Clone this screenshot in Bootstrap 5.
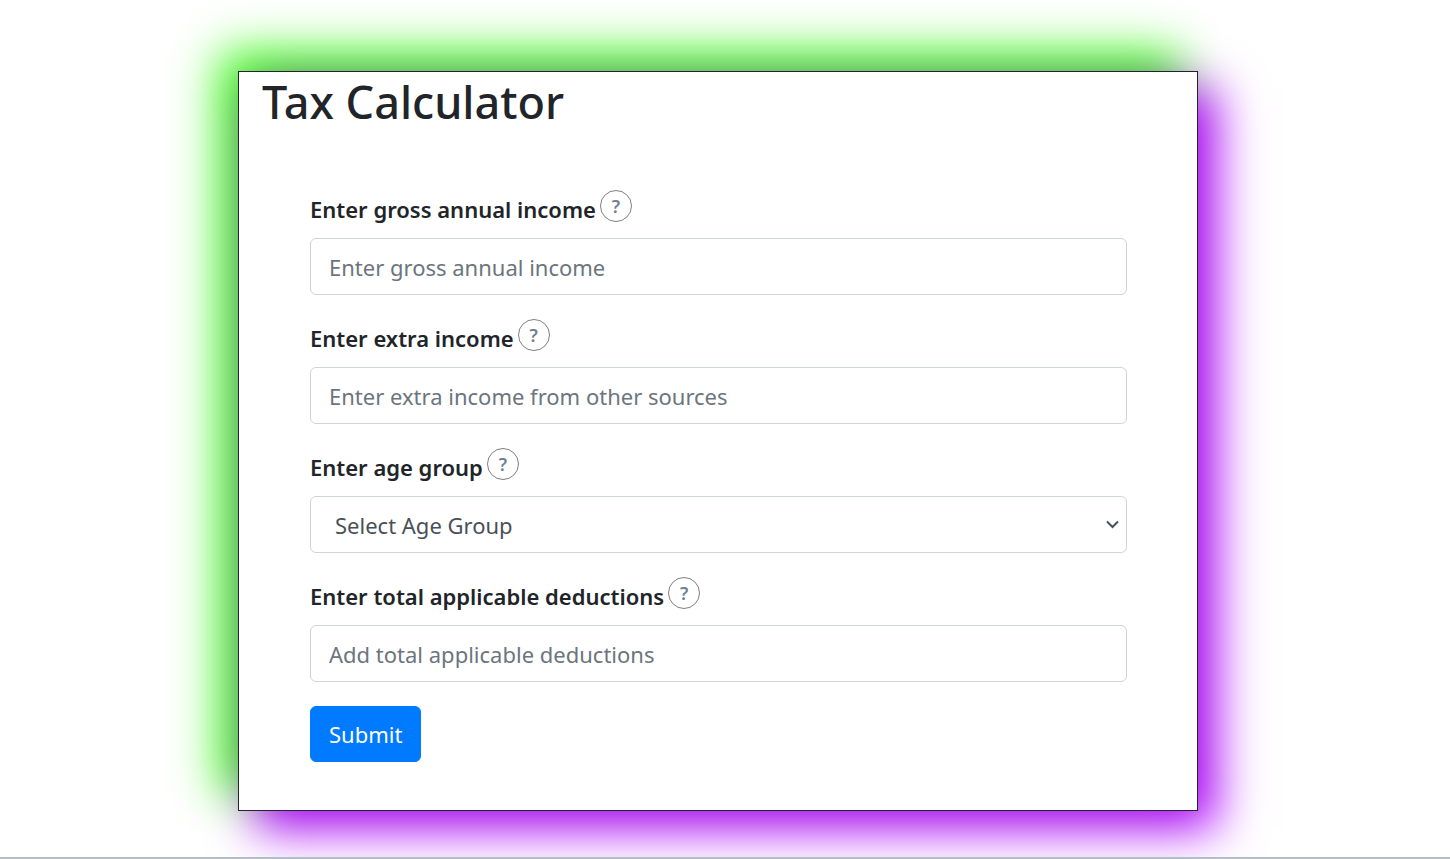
<!DOCTYPE html>
<html lang="en">
<head>
<meta charset="utf-8">
<meta name="viewport" content="width=device-width, initial-scale=1">
<title>Tax Calculator</title>
<link href="https://cdn.jsdelivr.net/npm/bootstrap@5.3.0/dist/css/bootstrap.min.css" rel="stylesheet">
<style>
  body { font-family: "Noto Sans", "Open Sans", sans-serif; font-size: 22px; line-height: 36px; color: #212529; }
  .page-main { padding: 71px 14px 46px 0; }
  .calc-panel { max-width: 960px; border: 1px solid #212529; background: #fff;
    box-shadow: 18px 18px 45px #b000fe, -18px -18px 45px #32fe0c; }
  .calc-title { font-size: 45px; line-height: 58px; font-weight: 500; padding: 1px 23px 0; }
  .calc-form { padding: 59px 70px 48px 71px; }
  .field-group { margin-bottom: 24px; }
  .field-head { height: 48px; gap: 4px; }
  .field-head label { font-size: 22px; font-weight: 600; padding-top: 1px; }
  .help-btn { width: 32px; height: 32px; border: 1px solid #808080; background: #fff; color: #708090;
    font-size: 18px; line-height: 28px; font-weight: 600; }
  .calc-form .form-control, .calc-form .form-select { height: 57px; padding: 9px 18px; border: 1px solid #ced4da;
    border-radius: 6px; font-size: 22px; line-height: 36px; color: #495057; }
  .calc-form .form-control::placeholder { color: #6c757d; opacity: 1; }
  .calc-form .form-select { padding-left: 24px; background-position: right 6px center; background-size: 15px 15px;
    background-image: url("data:image/svg+xml,%3Csvg xmlns='http://www.w3.org/2000/svg' viewBox='0 0 15 15'%3E%3Cpath d='M2 4.5l5.5 5.5L13 4.5' fill='none' stroke='%23495057' stroke-width='2'/%3E%3C/svg%3E"); }
  .submit-btn { height: 56px; padding: 9px 18px; border-radius: 6px; background: #007bff; border: 1px solid #007bff;
    color: #fff; font-size: 22px; line-height: 36px; }
  .page-end { height: 2px; background: #b4bcc4; }
</style>
</head>
<body>
<main class="page-main">
  <section class="calc-panel mx-auto">
    <h1 class="calc-title m-0">Tax Calculator</h1>
    <form class="calc-form">
      <div class="field-group">
        <div class="field-head d-flex align-items-start">
          <label for="income">Enter gross annual income</label>
          <button type="button" class="help-btn rounded-circle p-0" aria-label="About gross annual income">?</button>
        </div>
        <input id="income" type="text" class="form-control" placeholder="Enter gross annual income">
      </div>
      <div class="field-group">
        <div class="field-head d-flex align-items-start">
          <label for="extra">Enter extra income</label>
          <button type="button" class="help-btn rounded-circle p-0" aria-label="About extra income">?</button>
        </div>
        <input id="extra" type="text" class="form-control" placeholder="Enter extra income from other sources">
      </div>
      <div class="field-group">
        <div class="field-head d-flex align-items-start">
          <label for="age">Enter age group</label>
          <button type="button" class="help-btn rounded-circle p-0" aria-label="About age group">?</button>
        </div>
        <select id="age" class="form-select">
          <option>Select Age Group</option>
        </select>
      </div>
      <div class="field-group">
        <div class="field-head d-flex align-items-start">
          <label for="deductions">Enter total applicable deductions</label>
          <button type="button" class="help-btn rounded-circle p-0" aria-label="About deductions">?</button>
        </div>
        <input id="deductions" type="text" class="form-control" placeholder="Add total applicable deductions">
      </div>
      <button type="submit" class="btn submit-btn d-block">Submit</button>
    </form>
  </section>
</main>
<footer class="page-end"></footer>
<script src="https://cdn.jsdelivr.net/npm/bootstrap@5.3.0/dist/js/bootstrap.bundle.min.js"></script>
</body>
</html>
